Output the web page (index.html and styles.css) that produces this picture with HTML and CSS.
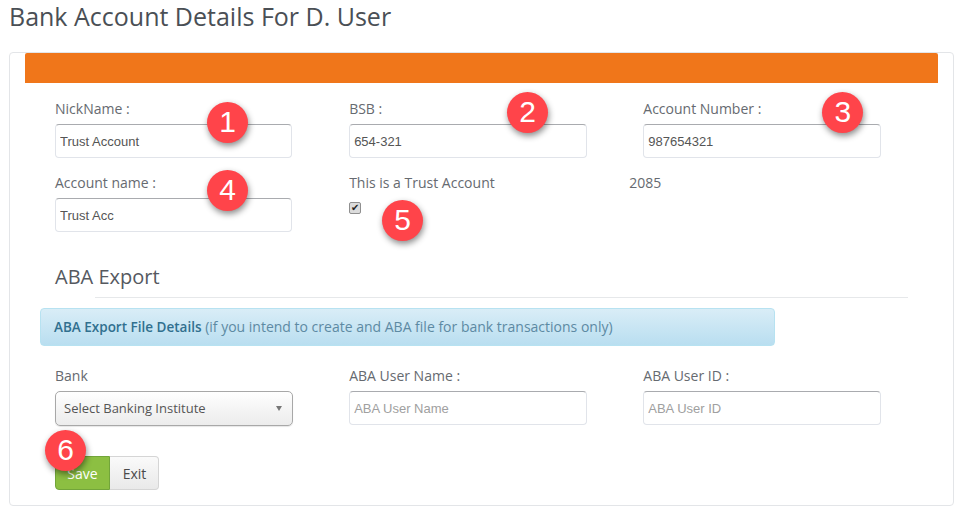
FILE: index.html
```html
<!DOCTYPE html>
<html lang="en">
<head>
<meta charset="utf-8">
<title>Bank Account Details</title>
<link rel="stylesheet" href="styles.css">
</head>
<body>
<h1 class="page-title">Bank Account Details For D. User</h1>
<section class="panel">
  <div class="panel-bar"></div>
  <form class="form">
    <div class="grid">
      <div class="field">
        <label class="label">NickName :</label>
        <input class="input" type="text" value="Trust Account">
        <span class="badge badge-1">1</span>
      </div>
      <div class="field">
        <label class="label">BSB :</label>
        <input class="input" type="text" value="654-321">
        <span class="badge badge-2">2</span>
      </div>
      <div class="field">
        <label class="label">Account Number :</label>
        <input class="input" type="text" value="987654321">
        <span class="badge badge-3">3</span>
      </div>
      <div class="field">
        <label class="label">Account name :</label>
        <input class="input" type="text" value="Trust Acc">
        <span class="badge badge-4">4</span>
      </div>
      <div class="field">
        <label class="label">This is a Trust Account</label>
        <input class="check" type="checkbox" checked>
        <span class="badge badge-5">5</span>
      </div>
      <div class="field">
        <span class="label label-code">2085</span>
      </div>
    </div>
    <h3 class="section-title">ABA Export</h3>
    <div class="rule"></div>
    <div class="alert"><strong>ABA Export File Details</strong> (if you intend to create and ABA file for bank transactions only)</div>
    <div class="grid grid-aba">
      <div class="field">
        <label class="label">Bank</label>
        <div class="select">Select Banking Institute<span class="caret"></span></div>
      </div>
      <div class="field">
        <label class="label">ABA User Name :</label>
        <input class="input" type="text" placeholder="ABA User Name">
      </div>
      <div class="field">
        <label class="label">ABA User ID :</label>
        <input class="input" type="text" placeholder="ABA User ID">
      </div>
    </div>
    <div class="actions">
      <button class="btn btn-save" type="button">Save</button><button class="btn btn-exit" type="button">Exit</button>
      <span class="badge badge-6">6</span>
    </div>
  </form>
</section>
</body>
</html>
```
FILE: styles.css
```css
* { box-sizing: border-box; }
html, body { margin: 0; height: 511px; overflow: hidden; background: #fff; }
body { font-family: "Open Sans", sans-serif; color: #555; font-size: 14px; }
.page-title {
  margin: 0 0 0 9px;
  height: 52px;
  padding-top: 0;
  font-size: 25px;
  line-height: 33px;
  font-weight: 400;
  color: #4a4f55;
}
.panel {
  margin: 0 11px 0 9px;
  height: 454px;
  padding: 0 15px;
  border: 1px solid #e3e5e8;
  border-radius: 4px;
  background: #fff;
}
.panel-bar { height: 30px; background: #f0761a; border-radius: 2px 2px 0 0; }
.form { padding: 17px 0 0 30px; position: relative; }
.grid { display: grid; grid-template-columns: repeat(3, 294.15px); row-gap: 16px; }
.field { position: relative; height: 58px; }
.label { display: block; height: 24px; line-height: 18px; color: #666a70; font-size: 14px; }
.label-code { margin-left: -14px; }
.input {
  display: block;
  width: 237.4px;
  height: 34px;
  padding: 1px 4px 0;
  border: 1px solid #e1e4ea;
  border-top-color: #a9abaf;
  border-radius: 4px;
  background: #fff;
  font-family: "Liberation Sans", Arial, sans-serif;
  font-size: 13px;
  color: #555;
  outline: none;
}
.input::placeholder { color: #a0a0a0; opacity: 1; }
.check {
  appearance: none;
  display: block;
  position: relative;
  width: 12px;
  height: 12px;
  margin: 4px 0 0;
  border: 1px solid #8f8f8f;
  border-radius: 2px;
  background: #dcdcdc;
}
.check::after {
  content: "\2714";
  position: absolute;
  left: 0;
  top: 0;
  width: 10px;
  height: 10px;
  font-family: "DejaVu Sans", sans-serif;
  font-size: 10px;
  line-height: 10px;
  text-align: center;
  color: #222;
}
.section-title { margin: 33px 0 0; height: 32px; font-size: 20px; line-height: 24px; font-weight: 400; color: #55595f; }
.rule { height: 1px; margin-left: 40px; background: #e6e8ea; width: 813px; }
.alert {
  width: 735px;
  height: 38px;
  margin: 10px 0 0 -15px;
  padding-left: 13px;
  line-height: 36px;
  border: 1px solid #b7e2f1;
  border-radius: 4px;
  background: linear-gradient(#d9edf7, #b9def0);
  color: #5d8aa3;
  font-size: 14px;
}
.alert strong { color: #31708f; font-weight: 600; font-size: 13.5px; }
.grid-aba { margin-top: 21px; }
.select {
  position: relative;
  width: 238px;
  height: 35px;
  padding-left: 8px;
  line-height: 33px;
  border: 1px solid #a8a8a8;
  border-radius: 5px;
  background: linear-gradient(#fff, #f4f4f4 55%, #ececec);
  box-shadow: 0 1px 1px rgba(0,0,0,.1);
  color: #555;
  font-size: 13px;
}
.caret {
  position: absolute;
  right: 10px;
  top: 14px;
  border-left: 3.5px solid transparent;
  border-right: 3.5px solid transparent;
  border-top: 5px solid #777;
}
.actions { position: relative; display: flex; margin-top: 31px; }
.btn { height: 34px; font-family: "Open Sans", sans-serif; font-size: 14px; padding: 0; }
.btn-save {
  width: 55px;
  border: 1px solid #72a53a;
  border-radius: 4px 0 0 4px;
  background: #8cbf42;
  color: #fff;
}
.btn-exit {
  width: 49px;
  padding-left: 1px;
  border: 1px solid #d5d5d5;
  border-left: 0;
  border-radius: 0 4px 4px 0;
  background: linear-gradient(#fafafa, #e9e9e9);
  color: #4a4a4a;
}
.badge {
  position: absolute;
  width: 41px;
  height: 41px;
  border-radius: 50%;
  background: #ff444a;
  color: #fff;
  font-family: "Liberation Sans", Arial, sans-serif;
  font-size: 30px;
  line-height: 40px;
  text-align: center;
  box-shadow: 1px 3px 6px rgba(0,0,0,.45);
}
.badge-1 { left: 152px; top: 2px; }
.badge-2 { left: 158px; top: -8px; }
.badge-3 { left: 179px; top: -8px; }
.badge-4 { left: 152px; top: -4px; }
.badge-5 { left: 33px; top: 26px; }
.badge-6 { left: -10px; top: -26px; }
```
